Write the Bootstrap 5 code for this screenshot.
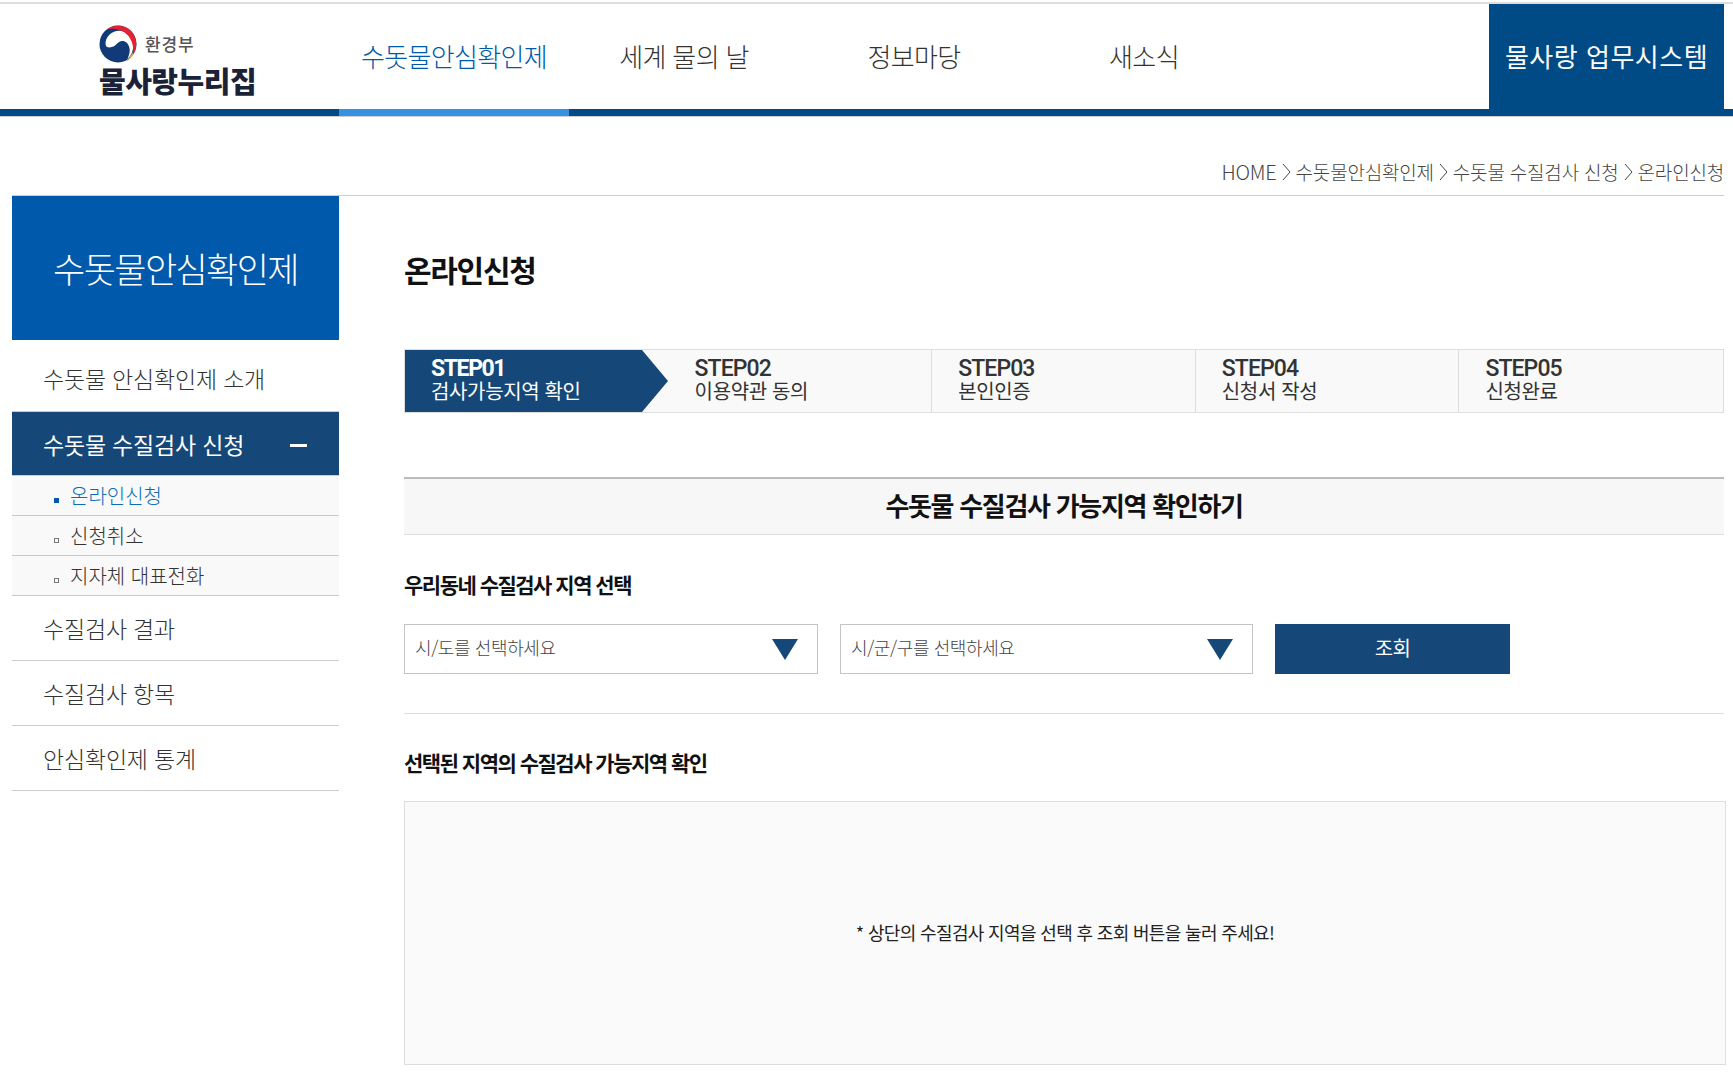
<!DOCTYPE html>
<html lang="ko">
<head>
    <meta charset="UTF-8">
    <meta name="viewport" content="width=device-width, initial-scale=1.0">
    <title>물사랑누리집</title>
    <link href="https://cdn.jsdelivr.net/npm/bootstrap@5.3.0/dist/css/bootstrap.min.css" rel="stylesheet">
    <style>
        body { font-family: "Noto Sans CJK KR", "Noto Sans", sans-serif; color: #333; background: #fff; margin-top: 2px; }
        a { text-decoration: none; color: inherit; }

        .top-wrap { border-top: 2px solid #ddd; border-bottom: 1px solid #ccc; }
        .top-head { height: 112px; border-bottom: 7px solid #004a85; }
        .logo-area { width: 339px; padding: 21px 0 0 99px; }
        .logo-sub { font-size: 17px; font-weight: 500; color: #555; margin-left: 8px; letter-spacing: .9px; }
        .logo-main { font-size: 29px; font-weight: 900; line-height: 32px; color: #1b2238; letter-spacing: -.5px; margin-top: 1px; }
        .gnb-item { width: 230px; height: 112px; margin-bottom: -7px; border-bottom: 7px solid transparent; font-size: 26px; font-weight: 300; letter-spacing: -.65px; color: #333; padding-top: 30px; text-align: center; line-height: 44px; }
        .gnb-item.on { color: #0059ab; border-bottom-color: #3592e0; }
        .biz-btn { width: 235px; margin-right: 9px; background: #004a85; color: #fff; font-size: 26px; font-weight: 400; letter-spacing: .5px; padding-top: 30px; text-align: center; line-height: 44px; }

        .crumb { margin: 0 9px 0 12px; height: 79px; border-bottom: 1px solid #ccc; font-size: 19px; font-weight: 300; letter-spacing: -.2px; color: #444; padding-top: 37px; line-height: 36px; }
        .crumb svg { margin: 9px 5px 0; flex: none; }
        .crumb-home { font-size: 20px; }

        .page-body { padding: 0 7px 0 12px; }
        .side { width: 327px; flex: none; }
        .side-title { height: 144px; background: #0059ab; color: #fff; font-size: 35px; font-weight: 300; letter-spacing: -1.6px; line-height: 144px; text-align: center; }
        .side-link { display: flex; align-items: center; justify-content: space-between; height: 65px; padding: 0 32px 0 31px; font-size: 23px; font-weight: 300; letter-spacing: -.2px; border-bottom: 1px solid #ccc; color: #333; }
        .side-link.first { height: 72px; padding-top: 5px; }
        .side-link.on { background: #154878; color: #fff; height: 64px; font-weight: 400; padding-top: 1px; }
        .side-minus { width: 17px; height: 3px; background: #fff; margin-top: 3px; }
        .side-sub { background: #f9f9f9; }
        .side-sub a { display: flex; align-items: center; height: 40px; padding: 1px 0 0 42px; font-size: 20px; font-weight: 300; letter-spacing: 0; border-bottom: 1px solid #c8c8c8; color: #333; }
        .side-sub a.on { color: #0b6db8; }
        .sq { width: 5px; height: 5px; border: 1px solid #777; margin-right: 11px; margin-top: 8px; flex: none; }
        .on > .sq { background: #0059ab; border-color: #0059ab; }

        .main-col { width: 1322px; margin-left: 65px; }
        .page-title { font-size: 30px; font-weight: 700; letter-spacing: -1.3px; color: #111; line-height: 44px; margin: 51px 0 0; }
        .steps { margin: 58px 2px 0 0; height: 64px; background: #f9f9f9; border: 1px solid #ddd; }
        .step-item { width: 20%; flex: none; padding: 9px 0 0 26px; line-height: 24px; font-size: 20px; font-weight: 400; letter-spacing: -.35px; border-right: 1px solid #ddd; color: #333; }
        .step-item:last-child { border-right: 0; }
        .step-item b { display: block; font-family: Roboto, "Noto Sans", sans-serif; font-size: 23px; line-height: 20px; font-weight: 500; letter-spacing: -.9px; }
        .step-item.on { color: #fff; background: #154878; border-right: 0; clip-path: polygon(0 0, 237px 0, 263px 50%, 237px 100%, 0 100%); }
        .step-item.on b { font-weight: 700; letter-spacing: -1.4px; }

        .sec-head { margin: 64px 2px 0 0; height: 58px; background: #f7f7f7; border-top: 2px solid #bbb; border-bottom: 1px solid #ddd; text-align: center; font-size: 26px; font-weight: 700; letter-spacing: -1.3px; line-height: 52px; color: #111; }
        .sub-head { font-size: 21px; font-weight: 700; letter-spacing: -1.5px; color: #111; line-height: 30px; margin: 34px 0 0; }
        .sub-head.lower { margin-top: 33px; }
        .picker-row { margin: 25px 2px 0 0; padding-bottom: 39px; border-bottom: 1px solid #ddd; gap: 22px; }
        .picker { width: 414px; height: 50px; border: 1px solid #c4c4c4; padding: 0 19px 0 10px; font-size: 18px; font-weight: 300; letter-spacing: -.4px; color: #444; }
        .picker + .picker { width: 413px; }
        .picker span { margin-bottom: 4px; }
        .go-btn { width: 235px; height: 50px; border: 0; border-radius: 0; background: #154878; color: #fff; font-size: 20px; letter-spacing: -.6px; padding-bottom: 8px; }
        .go-btn:hover { background: #154878; color: #fff; }
        .notice-box { height: 264px; margin-top: 24px; padding-bottom: 2px; background: #fafafa; border: 1px solid #ddd; font-size: 18px; font-weight: 400; letter-spacing: -.65px; color: #222; }
    </style>
</head>
<body>
    <div class="top-wrap">
        <header class="top-head d-flex">
            <a href="#" class="logo-area d-block">
                <div class="d-flex align-items-center">
                    <svg width="38" height="38" viewBox="0 0 40 40">
                        <circle cx="20" cy="20" r="19.500" fill="#123a78"/>
                        <path d="M7 21C6 13 13 6 21 6c9 0 15 8 15 16 0 5-2 10-6 14 2-5 3-9 2-12-1-5-5-8-9-7-4 1-5 5-9 6-3 1-6 1-7-2z" fill="#fff"/>
                        <path d="M36 28c1 3-2 8-7 10.500-1 0 1-1 1-2 3-3 5-6 6-8.500z" fill="#e9b04a"/>
                        <path d="M8 5c6-5 16-6 23-1 8 6 11 17 5 27 1-9-2-18-9-23C21 4 14 3 8 5z" fill="#e3232f"/>
                    </svg>
                    <span class="logo-sub">환경부</span>
                </div>
                <div class="logo-main">물사랑누리집</div>
            </a>
            <nav class="d-flex flex-grow-1">
                <a href="#" class="gnb-item on">수돗물안심확인제</a>
                <a href="#" class="gnb-item">세계 물의 날</a>
                <a href="#" class="gnb-item">정보마당</a>
                <a href="#" class="gnb-item">새소식</a>
            </nav>
            <a href="#" class="biz-btn">물사랑 업무시스템</a>
        </header>
    </div>

    <div class="crumb d-flex justify-content-end">
        <span class="crumb-home">HOME</span>
        <svg width="9" height="18" viewBox="0 0 9 18"><path d="M1 1l7 8-7 8" fill="none" stroke="#444"/></svg>
        <span>수돗물안심확인제</span>
        <svg width="9" height="18" viewBox="0 0 9 18"><path d="M1 1l7 8-7 8" fill="none" stroke="#444"/></svg>
        <span>수돗물 수질검사 신청</span>
        <svg width="9" height="18" viewBox="0 0 9 18"><path d="M1 1l7 8-7 8" fill="none" stroke="#444"/></svg>
        <span>온라인신청</span>
    </div>

    <div class="page-body d-flex">
        <aside class="side">
            <div class="side-title">수돗물안심확인제</div>
            <a href="#" class="side-link first">수돗물 안심확인제 소개</a>
            <a href="#" class="side-link on">수돗물 수질검사 신청<span class="side-minus"></span></a>
            <div class="side-sub">
                <a href="#" class="on"><span class="sq"></span>온라인신청</a>
                <a href="#"><span class="sq"></span>신청취소</a>
                <a href="#"><span class="sq"></span>지자체 대표전화</a>
            </div>
            <a href="#" class="side-link">수질검사 결과</a>
            <a href="#" class="side-link">수질검사 항목</a>
            <a href="#" class="side-link">안심확인제 통계</a>
        </aside>

        <main class="main-col">
            <h2 class="page-title">온라인신청</h2>

            <div class="steps d-flex">
                <div class="step-item on"><b>STEP01</b>검사가능지역 확인</div>
                <div class="step-item"><b>STEP02</b>이용약관 동의</div>
                <div class="step-item"><b>STEP03</b>본인인증</div>
                <div class="step-item"><b>STEP04</b>신청서 작성</div>
                <div class="step-item"><b>STEP05</b>신청완료</div>
            </div>

            <div class="sec-head">수돗물 수질검사 가능지역 확인하기</div>

            <h3 class="sub-head">우리동네 수질검사 지역 선택</h3>
            <div class="picker-row d-flex">
                <div class="picker d-flex align-items-center justify-content-between">
                    <span>시/도를 선택하세요</span>
                    <svg width="26" height="21" viewBox="0 0 26 21"><path d="M0 0h26L13 21z" fill="#154878"/></svg>
                </div>
                <div class="picker d-flex align-items-center justify-content-between">
                    <span>시/군/구를 선택하세요</span>
                    <svg width="26" height="21" viewBox="0 0 26 21"><path d="M0 0h26L13 21z" fill="#154878"/></svg>
                </div>
                <button type="button" class="btn go-btn">조회</button>
            </div>

            <h3 class="sub-head lower">선택된 지역의 수질검사 가능지역 확인</h3>
            <div class="notice-box d-flex align-items-center justify-content-center">* 상단의 수질검사 지역을 선택 후 조회 버튼을 눌러 주세요!</div>
        </main>
    </div>
</body>
</html>
